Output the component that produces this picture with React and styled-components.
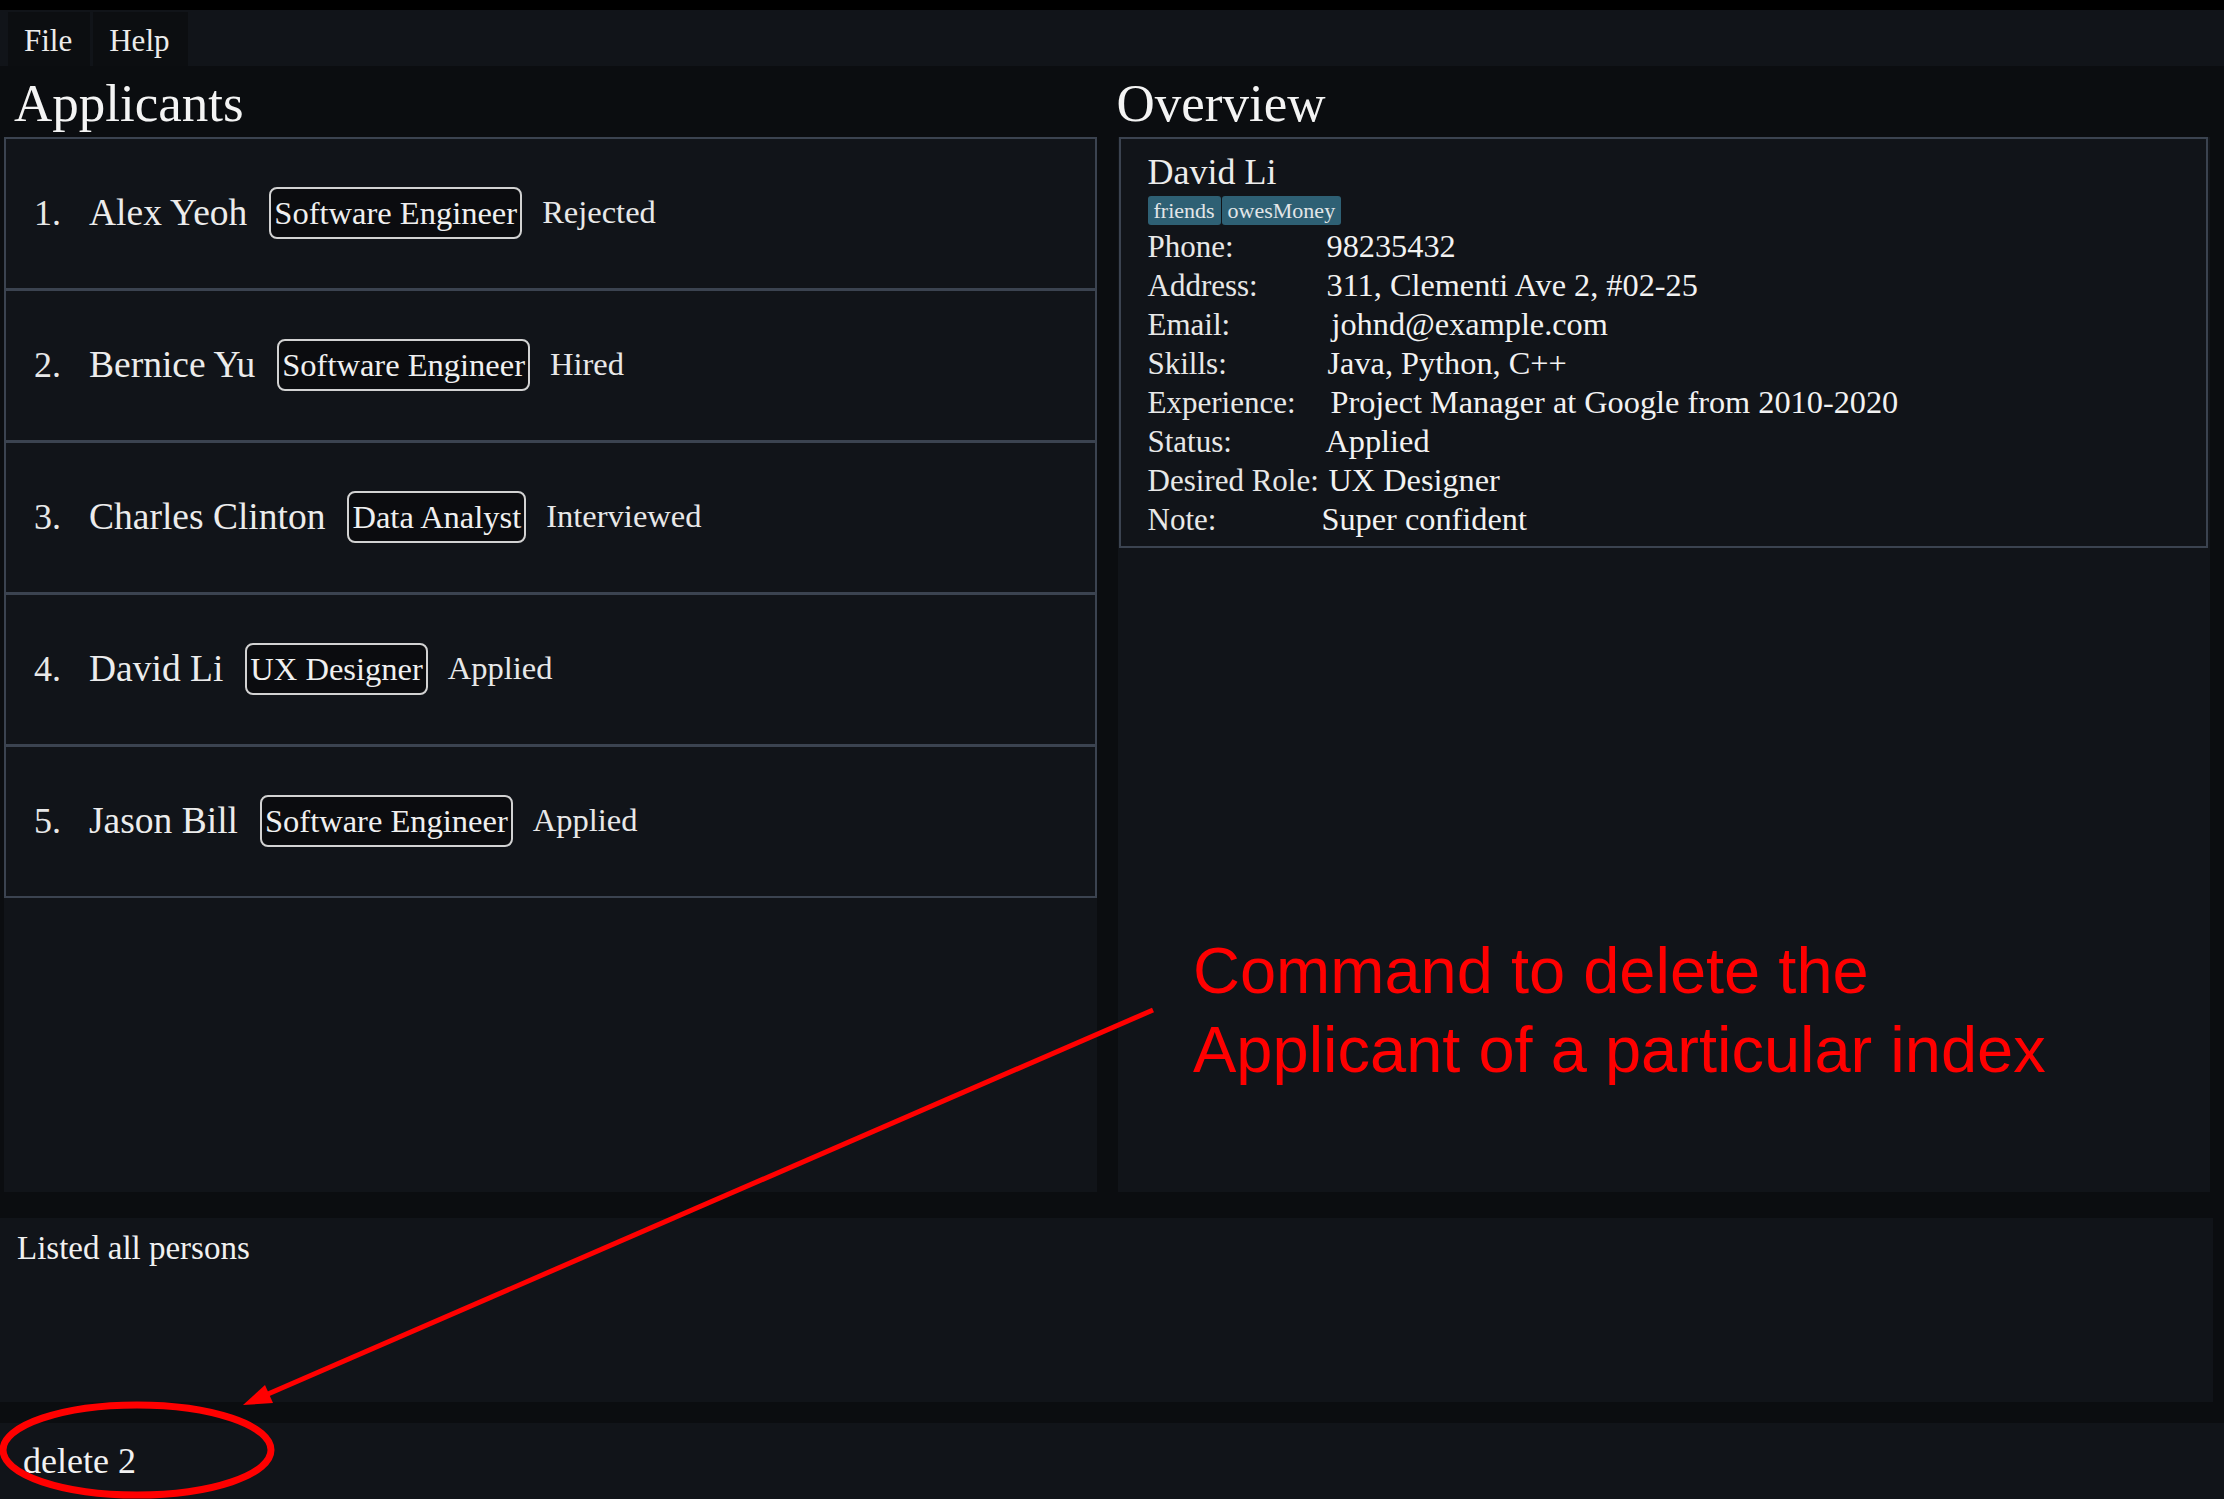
import React from "react"
import styled, { createGlobalStyle } from "styled-components"

const GlobalStyle = createGlobalStyle`
  html, body {
    margin: 0;
    padding: 0;
    background: #0b0d10;
  }
  body {
    font-family: "Liberation Serif", "Times New Roman", serif;
    color: #f0f0f0;
  }
`

const applicants = [
  { name: "Alex Yeoh", role: "Software Engineer", status: "Rejected" },
  { name: "Bernice Yu", role: "Software Engineer", status: "Hired" },
  { name: "Charles Clinton", role: "Data Analyst", status: "Interviewed" },
  { name: "David Li", role: "UX Designer", status: "Applied" },
  { name: "Jason Bill", role: "Software Engineer", status: "Applied" },
]

const details = [
  { label: "Phone:", value: "98235432" },
  { label: "Address:", value: "311, Clementi Ave 2, #02-25" },
  { label: "Email:", value: "johnd@example.com", nudge: 5 },
  { label: "Skills:", value: "Java, Python, C++", nudge: 1 },
  { label: "Experience:", value: "Project Manager at Google from 2010-2020", nudge: 4 },
  { label: "Status:", value: "Applied", nudge: -1 },
  { label: "Desired Role:", value: "UX Designer", nudge: 2 },
  { label: "Note:", value: "Super confident", nudge: -5 },
]

const App = () => {
  return (
    <Window>
      <GlobalStyle />
      <MenuBar>
        <MenuItem>File</MenuItem>
        <MenuItem>Help</MenuItem>
      </MenuBar>

      <Main>
        <Column>
          <Heading $indent={10}>Applicants</Heading>
          <Panel>
            <ListBox>
              {applicants.map((a, i) => (
                <Row key={a.name}>
                  <Index>{i + 1}.</Index>
                  <Name>{a.name}</Name>
                  <RoleTag>{a.role}</RoleTag>
                  <Status>{a.status}</Status>
                </Row>
              ))}
            </ListBox>
          </Panel>
        </Column>

        <Column>
          <Heading $indent={-1}>Overview</Heading>
          <Panel>
            <Card>
              <CardName>David Li</CardName>
              <Tags>
                <Tag>friends</Tag>
                <Tag>owesMoney</Tag>
              </Tags>
              <DetailGrid>
                {details.map(d => (
                  <React.Fragment key={d.label}>
                    <Label>{d.label}</Label>
                    <Value $nudge={d.nudge}>{d.value}</Value>
                  </React.Fragment>
                ))}
              </DetailGrid>
            </Card>
          </Panel>
        </Column>
      </Main>

      <ResultBox>Listed all persons</ResultBox>
      <CommandBox>delete 2</CommandBox>

      <Markup viewBox="0 0 2224 1499" width="2224" height="1499">
        <line x1="1153" y1="1010" x2="268" y2="1394" stroke="#ff0000" strokeWidth="5" />
        <polygon points="243,1405 273,1403 265,1385" fill="#ff0000" />
        <ellipse cx="137" cy="1450" rx="134" ry="45" fill="none" stroke="#ff0000" strokeWidth="7" />
      </Markup>
      <Note>
        Command to delete the
        <br />
        Applicant of a particular index
      </Note>
    </Window>
  )
}

const Window = styled.div`
  position: relative;
  width: 2224px;
  height: 1499px;
  display: flex;
  flex-direction: column;
  overflow: hidden;
  background: #0b0d10;
`

const MenuBar = styled.div`
  display: flex;
  gap: 3px;
  height: 54px;
  padding: 2px 0 0 8px;
  border-top: 10px solid #000;
  background: #111419;
`

const MenuItem = styled.div`
  display: flex;
  align-items: center;
  padding: 4px 18px 0 16px;
  font-size: 31px;
  color: #ececec;
  background: #0c0e11;
`

const Main = styled.div`
  display: flex;
  gap: 21px;
  height: 1126px;
  padding: 0 14px 0 4px;
`

const Column = styled.div`
  flex: 1;
  display: flex;
  flex-direction: column;
`

const Heading = styled.div`
  font-size: 53px;
  line-height: 68px;
  padding-top: 3px;
  margin-left: ${p => p.$indent}px;
  color: #f4f4f4;
`

const Panel = styled.div`
  flex: 1;
  background: #111419;
`

const ListBox = styled.div`
  border: 2px solid #3b4350;
`

const Row = styled.div`
  display: flex;
  align-items: center;
  height: 149px;
  padding: 0 0 2px 28px;
  box-sizing: border-box;

  & + & {
    height: 152px;
    border-top: 3px solid #3b4350;
  }
`

const Index = styled.span`
  width: 55px;
  font-size: 36px;
  color: #e8e8e8;
`

const Name = styled.span`
  font-size: 37.5px;
  margin-right: 22px;
  color: #ececec;
`

const RoleTag = styled.span`
  font-size: 32.5px;
  line-height: 48px;
  padding: 0 3px;
  margin-right: 20px;
  border: 2px solid #d2d2d2;
  border-radius: 8px;
  background: #0b0c0f;
  color: #f0f0f0;
`

const Status = styled.span`
  font-size: 32.5px;
  color: #e8e8e8;
`

const Card = styled.div`
  border: 2px solid #3b4350;
  margin: 0 2px 0 1px;
  padding: 11px 0 7px 27px;
`

const CardName = styled.div`
  font-size: 36px;
  line-height: 44px;
  color: #ececec;
`

const Tags = styled.div`
  display: flex;
  gap: 1px;
  margin-top: 2px;
`

const Tag = styled.span`
  font-size: 22px;
  line-height: 29px;
  padding: 0 6px;
  border-radius: 3px;
  background: #2e6074;
  color: #e2e6e8;
`

const DetailGrid = styled.div`
  display: grid;
  grid-template-columns: 179px 1fr;
  margin-top: 2px;
  font-size: 31px;
  line-height: 39px;
`

const Label = styled.span`
  color: #e8e8e8;
  white-space: nowrap;
`

const Value = styled.span`
  margin-left: ${p => p.$nudge || 0}px;
  font-size: 32.3px;
  color: #f2f2f2;
`

const ResultBox = styled.div`
  width: 2213px;
  height: 184px;
  box-sizing: border-box;
  margin-top: 26px;
  padding: 11px 17px;
  font-size: 33px;
  line-height: 38px;
  background: #111419;
  color: #f0f0f0;
`

const CommandBox = styled.div`
  width: 2213px;
  flex: 1;
  margin-top: 21px;
  padding-left: 23px;
  font-size: 36px;
  line-height: 76px;
  background: #111419;
  color: #f2f2f2;
`

const Markup = styled.svg`
  position: absolute;
  top: 0;
  left: 0;
  pointer-events: none;
`

const Note = styled.div`
  position: absolute;
  left: 1193px;
  top: 931px;
  font-family: "Liberation Sans", Arial, sans-serif;
  font-size: 65px;
  line-height: 79px;
  color: #ff0000;
  white-space: nowrap;
`

export default App
